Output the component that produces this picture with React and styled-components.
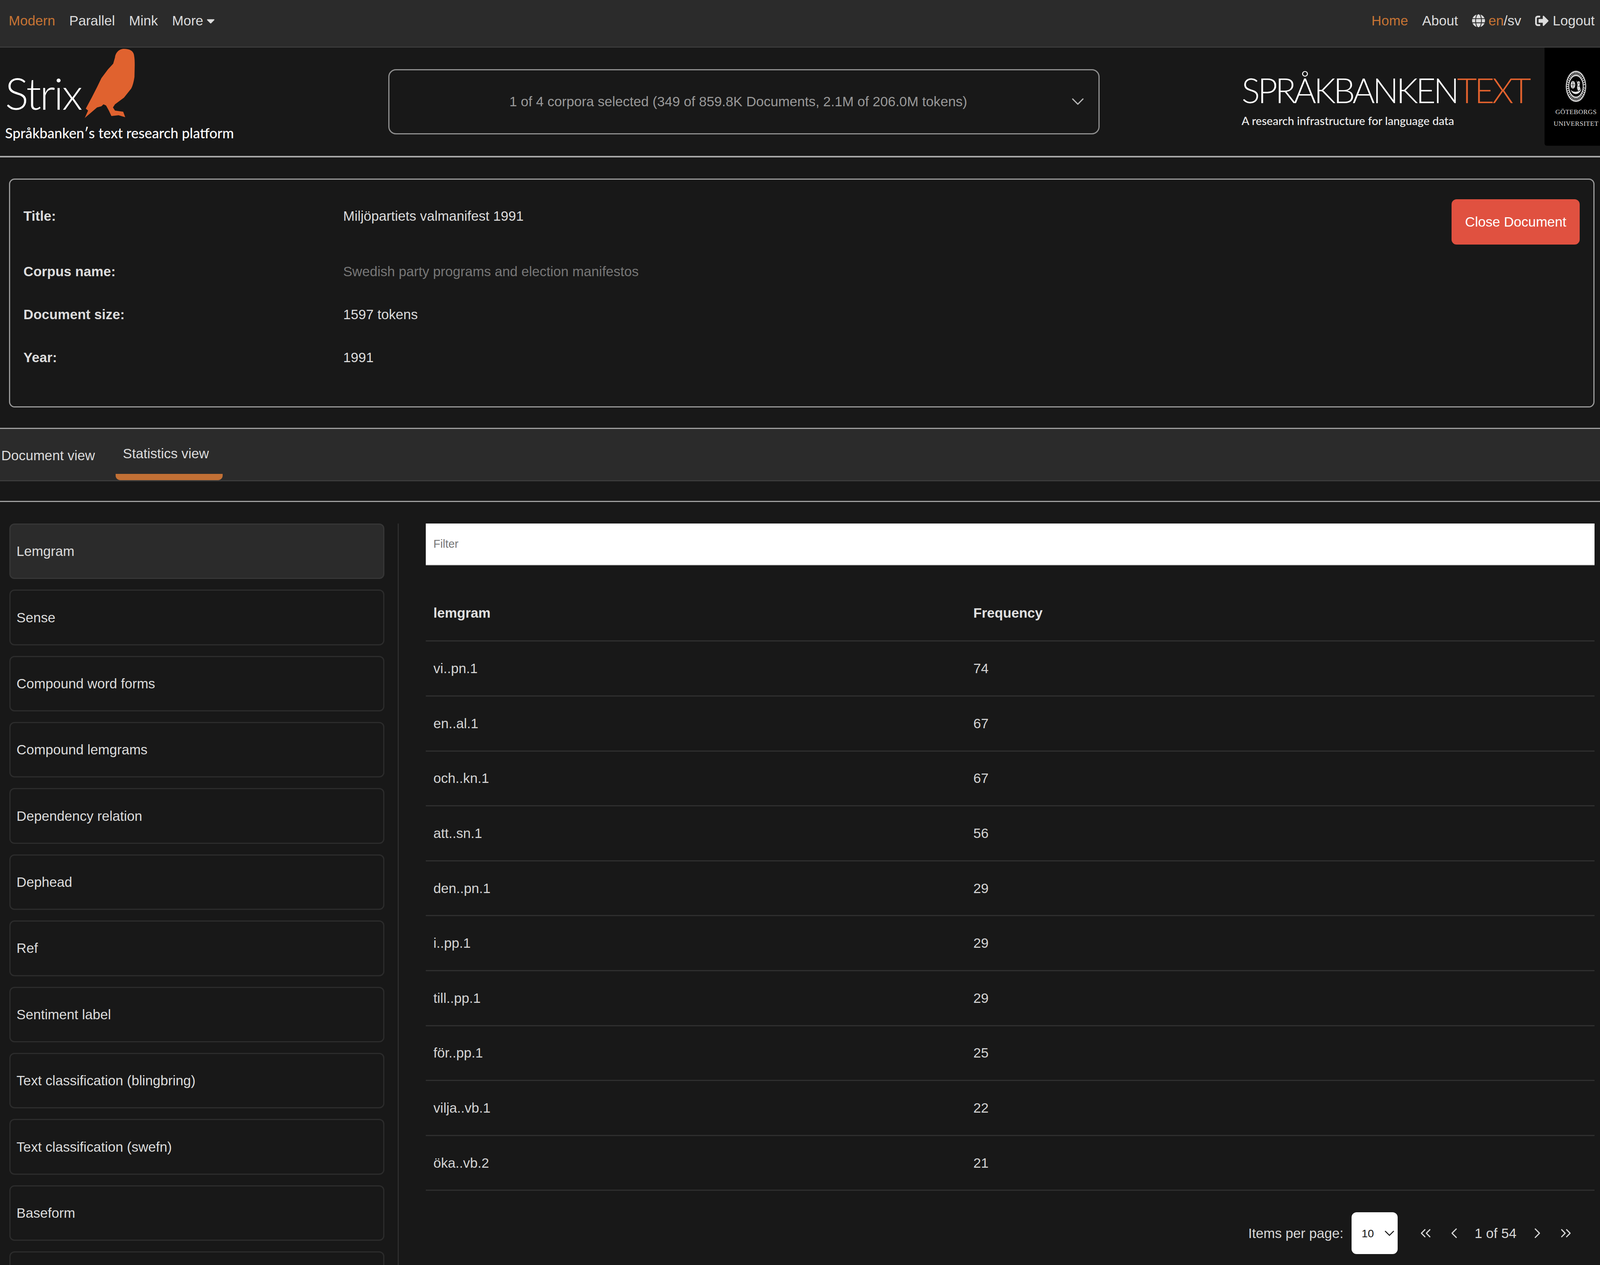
import React from 'react';
import styled, { createGlobalStyle } from 'styled-components';
import { FaCaretDown, FaGlobe, FaSignOutAlt } from 'react-icons/fa';
import { ChevronDown, ChevronLeft, ChevronRight, ChevronsLeft, ChevronsRight } from 'lucide-react';

// measurements are taken from the 6246x3238 reference
const w = (n) => `${(n / 62.46).toFixed(4)}vw`;
const h = (n) => `${(n / 32.38).toFixed(4)}vh`;

const GlobalStyle = createGlobalStyle`
  html, body {
    margin: 0;
    padding: 0;
    width: 100vw;
    height: 100vh;
    overflow: hidden;
    background: #181818;
  }
  body {
    color: #dcdcdc;
    font-family: "Liberation Sans", Arial, sans-serif;
    font-size: ${w(53.5)};
    line-height: ${h(80)};
  }
  * { box-sizing: border-box; }
`;

const Navbar = styled.nav`
  display: flex;
  justify-content: space-between;
  height: ${h(122)};
  padding: ${h(13)} ${w(21)} 0 ${w(34)};
  background: #2b2b2b;
  border-bottom: 3px solid #3b3b3b;
`;

const NavGroup = styled.div`
  display: flex;
  gap: ${w(55)};
`;

const NavItem = styled.a`
  display: flex;
  align-items: center;
  height: ${h(80)};
  gap: ${(p) => w(p.$gap || 0)};
  color: ${(p) => (p.$active ? '#c77434' : '#dcdcdc')};

  & svg {
    width: ${(p) => w(p.$icon || 50)};
    height: ${(p) => w(p.$icon || 50)};
  }
`;

const Orange = styled.span`
  color: #c77434;
`;

const Header = styled.header`
  display: flex;
  align-items: flex-start;
  height: ${h(281)};
  border-bottom: 4px solid #a8a8a8;
`;

const StrixBlock = styled.div`
  width: ${w(1515)};
  flex: none;
  padding-left: ${w(20)};
`;

const StrixRow = styled.div`
  display: flex;
  align-items: flex-start;
  height: ${h(188)};
`;

const StrixWord = styled.span`
  font-family: Lato, "Liberation Sans", sans-serif;
  font-weight: 300;
  font-size: ${w(172)};
  line-height: ${h(190)};
  margin-top: ${h(21)};
  color: #fff;
  letter-spacing: ${w(-6)};
`;

const Bird = styled.svg`
  width: ${w(195)};
  height: ${h(178)};
  margin: ${h(3)} 0 0 ${w(14)};
`;

const StrixTag = styled.div`
  font-family: Lato, "Liberation Sans", sans-serif;
  font-weight: 500;
  font-size: ${w(54.5)};
  line-height: ${h(62)};
  color: #fff;
  white-space: nowrap;
`;

const CorpusSelect = styled.div`
  position: relative;
  flex: none;
  width: ${w(2778)};
  height: ${h(167)};
  margin-top: ${h(55)};
  padding-right: ${w(44)};
  display: flex;
  align-items: center;
  justify-content: center;
  border: 3px solid #8f8f8f;
  border-radius: ${w(30)};
  color: #999;
  white-space: nowrap;
`;

const CorpusChevron = styled(ChevronDown)`
  position: absolute;
  right: ${w(41)};
  top: 50%;
  width: ${w(80)};
  height: ${w(80)};
  transform: translateY(-50%);
  color: #b5b5b5;
`;

const SbBlock = styled.div`
  margin-left: auto;
  padding-top: ${h(42)};
`;

const SbWord = styled.div`
  font-family: Lato, "Liberation Sans", sans-serif;
  font-weight: 300;
  font-size: ${w(134)};
  line-height: ${h(132)};
  letter-spacing: ${w(-9)};
  color: #fff;
  white-space: nowrap;
`;

const SbAccent = styled.span`
  color: #e2622e;
`;

const SbTag = styled.div`
  font-family: Lato, "Liberation Sans", sans-serif;
  font-weight: 500;
  font-size: ${w(44.3)};
  line-height: ${h(44)};
  color: #f0f0f0;
  margin-top: ${h(-9)};
  white-space: nowrap;
`;

const GuBox = styled.div`
  flex: none;
  width: ${w(217)};
  height: ${h(251)};
  margin-left: ${w(61)};
  padding: ${h(57)} 0 0 ${w(30)};
  background: #000;
  border-radius: 0 0 0 6px;
  display: flex;
  flex-direction: column;
  align-items: center;
  overflow: hidden;
`;

const GuSeal = styled.svg`
  width: ${w(84)};
  height: ${h(84)};
  flex: none;
`;

const GuText = styled.div`
  font-family: "Liberation Serif", serif;
  font-size: ${w(26)};
  line-height: ${h(30)};
  letter-spacing: ${w(0.6)};
  color: #dedede;
  text-align: center;
  white-space: nowrap;
  margin-top: ${h(9)};
`;

const DocCard = styled.section`
  display: flex;
  justify-content: space-between;
  align-items: flex-start;
  height: ${h(586)};
  margin: ${h(54)} ${w(22)} 0 ${w(35)};
  padding: ${h(38)} ${w(52)} 0 ${w(52)};
  border: 3px solid #9a9a9a;
  border-radius: ${w(22)};
`;

const InfoRow = styled.div`
  display: flex;
  height: ${h(110)};
  align-items: center;
  margin-bottom: ${(p) => h(p.$tall ? 32 : 0)};
`;

const InfoLabel = styled.div`
  width: ${w(1248)};
  font-weight: 700;
`;

const InfoValue = styled.div`
  color: ${(p) => (p.$muted ? '#777' : '#dcdcdc')};
`;

const CloseButton = styled.button`
  width: ${w(501)};
  height: ${h(116)};
  margin-top: ${h(12)};
  border: 0;
  border-radius: ${w(20)};
  background: #e05140;
  color: #fff;
  font: inherit;
`;

const TabBar = styled.div`
  display: flex;
  height: ${h(137)};
  margin-top: ${h(52)};
  padding-left: ${w(5)};
  background: #2b2b2b;
  border-top: 3px solid #a0a0a0;
  border-bottom: 3px solid #3b3b3b;
`;

const Tab = styled.div`
  height: 100%;
  padding: ${(p) => (p.$active ? `${h(23)} ${w(53)} 0 ${w(29)}` : `${h(28)} 0 0`)};
  margin-right: ${(p) => w(p.$active ? 0 : 80)};
  border-bottom: ${(p) => (p.$active ? `${h(17)} solid #c27035` : '0')};
  border-radius: 0 0 ${w(18)} ${w(18)};
`;

const MainRule = styled.div`
  height: 3px;
  margin-top: ${h(50)};
  background: #a0a0a0;
`;

const Content = styled.main`
  display: grid;
  grid-template-columns: ${w(1557)} 1fr;
  padding-top: ${h(55)};
`;

const SideList = styled.aside`
  display: flex;
  flex-direction: column;
  gap: ${h(27)};
  padding: 0 ${w(52)} 0 ${w(36)};
  border-right: 3px solid #2e2e2e;
`;

const SideItem = styled.div`
  height: ${h(142.4)};
  flex: none;
  padding: 0 ${w(24)};
  display: flex;
  align-items: center;
  background: ${(p) => (p.$active ? '#2b2b2b' : 'transparent')};
  border: 3px solid ${(p) => (p.$active ? '#363636' : '#2c2c2c')};
  border-radius: ${w(20)};
`;

const StatsPane = styled.div`
  padding: 0 ${w(22)} 0 ${w(105)};
`;

const FilterInput = styled.div`
  height: ${h(107)};
  padding: 0 ${w(30)};
  display: flex;
  align-items: center;
  background: #fff;
  border-bottom: 2px solid #ccc;
  color: #757575;
  font-size: ${w(44)};
`;

const StatsTable = styled.table`
  width: 100%;
  margin-top: ${h(51)};
  border-collapse: collapse;
  table-layout: fixed;
`;

const Th = styled.th`
  height: ${h(143)};
  padding: 0 ${w(30)};
  text-align: left;
  font-weight: 700;
  color: #e0e0e0;
  width: ${(p) => p.$w || 'auto'};
  border-bottom: 3px solid #2f2f2f;
`;

const Td = styled.td`
  height: ${h(140.6)};
  padding: 0 ${w(30)};
  color: #d4d4d4;
  border-bottom: 3px solid #2f2f2f;
`;

const Pager = styled.div`
  display: flex;
  justify-content: flex-end;
  align-items: center;
  margin-top: ${h(55)};
  padding-right: ${w(78)};
  color: #d8d8d8;
`;

const PerPage = styled.span`
  margin-right: ${w(31)};
`;

const PageSize = styled.div`
  width: ${w(180)};
  height: ${h(107)};
  padding-left: ${w(40)};
  margin-right: ${w(77)};
  display: flex;
  justify-content: space-between;
  align-items: center;
  background: #fff;
  color: #111;
  font-size: ${w(43)};
  border-radius: ${w(20)};

  & svg {
    width: ${w(64)};
    height: ${w(64)};
  }
`;

const PageButton = styled.span`
  display: flex;
  margin-right: ${(p) => w(p.$gap || 0)};
  color: #d8d8d8;

  & svg {
    width: ${w(66)};
    height: ${w(66)};
  }
`;

const PageLabel = styled.span`
  margin: 0 ${w(49)} 0 ${w(47)};
`;

// the twelfth entry is cut off by the bottom of the window, before its label starts
const categories = [
  'Lemgram',
  'Sense',
  'Compound word forms',
  'Compound lemgrams',
  'Dependency relation',
  'Dephead',
  'Ref',
  'Sentiment label',
  'Text classification (blingbring)',
  'Text classification (swefn)',
  'Baseform',
  '',
];

const rows = [
  ['vi..pn.1', 74],
  ['en..al.1', 67],
  ['och..kn.1', 67],
  ['att..sn.1', 56],
  ['den..pn.1', 29],
  ['i..pp.1', 29],
  ['till..pp.1', 29],
  ['för..pp.1', 25],
  ['vilja..vb.1', 22],
  ['öka..vb.2', 21],
];

const docInfo = [
  ['Title:', 'Miljöpartiets valmanifest 1991'],
  ['Corpus name:', 'Swedish party programs and election manifestos'],
  ['Document size:', '1597 tokens'],
  ['Year:', '1991'],
];

function App() {
  return (
    <>
      <GlobalStyle />
      <Navbar>
        <NavGroup>
          <NavItem $active>Modern</NavItem>
          <NavItem>Parallel</NavItem>
          <NavItem>Mink</NavItem>
          <NavItem $gap={4}>More <FaCaretDown /></NavItem>
        </NavGroup>
        <NavGroup>
          <NavItem $active>Home</NavItem>
          <NavItem>About</NavItem>
          <NavItem $gap={12} $icon={52}>
            <FaGlobe />
            <span><Orange>en</Orange>/sv</span>
          </NavItem>
          <NavItem $gap={15} $icon={53}><FaSignOutAlt /> Logout</NavItem>
        </NavGroup>
      </Navbar>

      <Header>
        <StrixBlock>
          <StrixRow>
            <StrixWord>Strix</StrixWord>
            <Bird viewBox="331 125 195 178" preserveAspectRatio="none">
              <path
                fill="#e0622f"
                d="M484 125 C505 125 520 130 523 140 C526 150 526 158 526 167 L525 197 C522 210 518 220 512 227 L484 250 L449 267 L441 275 L449 283 L481 286 L489 300 L463 295 L435 297 L425 283 L414 270 L404 267 L396 272 L379 275 L331 302 L344 283 L335 278 L358 250 L379 223 L396 200 L421 178 L442 163 L449 147 C451 135 465 125 484 125 Z"
              />
            </Bird>
          </StrixRow>
          <StrixTag>Språkbanken′s text research platform</StrixTag>
        </StrixBlock>

        <CorpusSelect>
          1 of 4 corpora selected (349 of 859.8K Documents, 2.1M of 206.0M tokens)
          <CorpusChevron strokeWidth={1.4} />
        </CorpusSelect>

        <SbBlock>
          <SbWord>SPRÅKBANKEN<SbAccent>TEXT</SbAccent></SbWord>
          <SbTag>A research infrastructure for language data</SbTag>
        </SbBlock>

        <GuBox>
          <GuSeal viewBox="0 0 84 84" preserveAspectRatio="none">
            <circle cx="42" cy="42" r="40" fill="#c9c9c9" />
            <circle cx="42" cy="42" r="33" fill="none" stroke="#000" strokeWidth="6" strokeDasharray="3 2.5" />
            <circle cx="42" cy="42" r="27" fill="#000" stroke="#d8d8d8" strokeWidth="1.5" />
            <ellipse cx="30" cy="38" rx="9" ry="10" fill="#d6d6d6" />
            <path d="M23 38 H37 M30 29 V47" stroke="#000" strokeWidth="1.2" />
            <path d="M44 26 L48 31 L53 28 L58 32 L56 40 L60 50 L50 54 L46 46 L48 38 Z" fill="#d6d6d6" />
            <path d="M50 34 H56 M50 42 H56" stroke="#000" strokeWidth="1.2" />
            <path d="M21 50 C28 66 56 66 64 48 C58 56 30 60 21 50 Z" fill="#e4e4e4" />
          </GuSeal>
          <GuText>GÖTEBORGS<br />UNIVERSITET</GuText>
        </GuBox>
      </Header>

      <DocCard>
        <div>
          {docInfo.map(([label, value], i) => (
            <InfoRow key={label} $tall={i === 0}>
              <InfoLabel>{label}</InfoLabel>
              <InfoValue $muted={i === 1}>{value}</InfoValue>
            </InfoRow>
          ))}
        </div>
        <CloseButton>Close Document</CloseButton>
      </DocCard>

      <TabBar>
        <Tab>Document view</Tab>
        <Tab $active>Statistics view</Tab>
      </TabBar>
      <MainRule />

      <Content>
        <SideList>
          {categories.map((name, i) => (
            <SideItem key={i} $active={i === 0}>{name}</SideItem>
          ))}
        </SideList>
        <StatsPane>
          <FilterInput>Filter</FilterInput>
          <StatsTable>
            <thead>
              <tr>
                <Th $w="46.2%">lemgram</Th>
                <Th>Frequency</Th>
              </tr>
            </thead>
            <tbody>
              {rows.map(([word, freq]) => (
                <tr key={word}>
                  <Td>{word}</Td>
                  <Td>{freq}</Td>
                </tr>
              ))}
            </tbody>
          </StatsTable>
          <Pager>
            <PerPage>Items per page:</PerPage>
            <PageSize>10 <ChevronDown strokeWidth={1.4} /></PageSize>
            <PageButton $gap={45}><ChevronsLeft strokeWidth={1.6} /></PageButton>
            <PageButton><ChevronLeft strokeWidth={1.6} /></PageButton>
            <PageLabel>1 of 54</PageLabel>
            <PageButton $gap={45}><ChevronRight strokeWidth={1.6} /></PageButton>
            <PageButton><ChevronsRight strokeWidth={1.6} /></PageButton>
          </Pager>
        </StatsPane>
      </Content>
    </>
  );
}

export default App;
